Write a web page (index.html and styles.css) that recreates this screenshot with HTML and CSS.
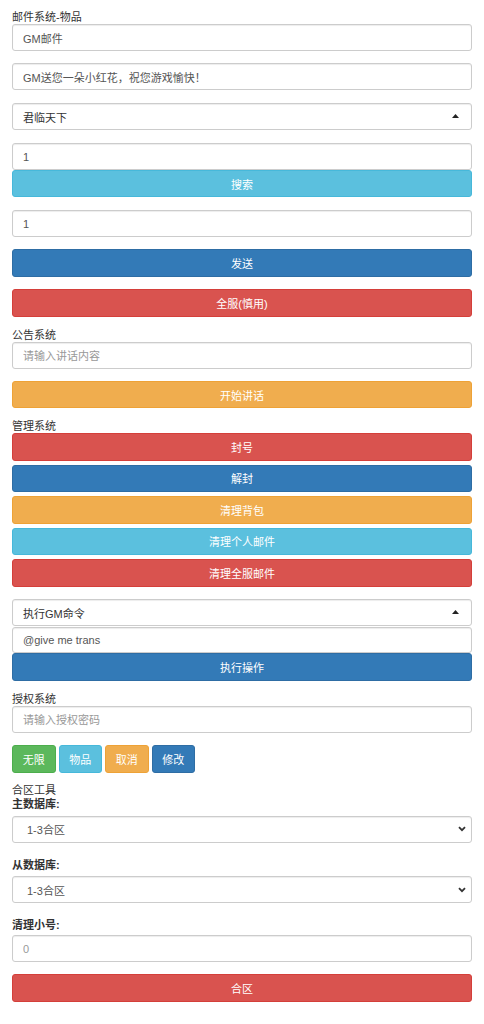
FILE: index.html
```html
<!DOCTYPE html>
<html lang="zh-CN">
<head>
<meta charset="utf-8">
<title>GM</title>
<link rel="stylesheet" href="styles.css">
</head>
<body>
<div class="page">
  <div class="title">邮件系统-物品</div>
  <input class="field" type="text" value="GM邮件">
  <input class="field mt12" type="text" value="GM送您一朵小红花，祝您游戏愉快！">
  <div class="select mt13"><span>君临天下</span><svg class="caret-up" width="7" height="4" viewBox="0 0 7 4"><path d="M0 4 L3.5 0 L7 4 Z" fill="#222"/></svg></div>
  <input class="field mt13" type="text" value="1">
  <button class="btn info">搜索</button>
  <input class="field mt13" type="text" value="1">
  <button class="btn primary tall mt12">发送</button>
  <button class="btn danger tall mt12">全服(慎用)</button>

  <div class="title mt11">公告系统</div>
  <input class="field" type="text" placeholder="请输入讲话内容">
  <button class="btn warning mt12">开始讲话</button>

  <div class="title mt11">管理系统</div>
  <div class="stack">
    <button class="btn danger mid">封号</button>
    <button class="btn primary mid">解封</button>
    <button class="btn warning mid">清理背包</button>
    <button class="btn info mid">清理个人邮件</button>
    <button class="btn danger mid">清理全服邮件</button>
  </div>
  <div class="select cmd"><span>执行GM命令</span><svg class="caret-up" width="7" height="4" viewBox="0 0 7 4"><path d="M0 4 L3.5 0 L7 4 Z" fill="#222"/></svg></div>
  <input class="field short mt1" type="text" value="@give me trans">
  <button class="btn primary tall">执行操作</button>

  <div class="title mt11">授权系统</div>
  <input class="field" type="text" placeholder="请输入授权密码">
  <div class="btn-row">
    <button class="btn small success">无限</button>
    <button class="btn small info">物品</button>
    <button class="btn small warning">取消</button>
    <button class="btn small primary">修改</button>
  </div>

  <div class="title mt10">合区工具</div>
  <div class="label">主数据库:</div>
  <div class="select native"><span>1-3合区</span><svg class="chev" width="8" height="6" viewBox="0 0 8 6"><path d="M1 1.2 L4 4.2 L7 1.2" fill="none" stroke="#333" stroke-width="1.8"/></svg></div>
  <div class="label mt15">从数据库:</div>
  <div class="select native"><span>1-3合区</span><svg class="chev" width="8" height="6" viewBox="0 0 8 6"><path d="M1 1.2 L4 4.2 L7 1.2" fill="none" stroke="#333" stroke-width="1.8"/></svg></div>
  <div class="label mt15 lb3">清理小号:</div>
  <input class="field" type="text" placeholder="0">
  <button class="btn danger tall mt12">合区</button>
</div>
</body>
</html>
```

FILE: styles.css
```css
* {
  box-sizing: border-box;
}

html, body {
  margin: 0;
  padding: 0;
  background: #fff;
}

body {
  font-family: "Liberation Sans", Arial, "Noto Sans CJK SC", sans-serif;
  font-size: 11px;
  color: #333;
}

.page {
  display: flex;
  flex-direction: column;
  padding: 10px 12px 0;
  width: 484px;
}

.title {
  line-height: 14px;
  height: 14px;
  color: #333;
}

.label {
  line-height: 14px;
  height: 14px;
  font-weight: bold;
  color: #333;
  margin-bottom: 4.5px;
}

.lb3 {
  margin-bottom: 3px;
}

.field {
  display: block;
  width: 100%;
  height: 27px;
  margin: 0;
  padding: 0 10px;
  font-family: inherit;
  font-size: 11px;
  color: #555;
  background: #fff;
  border: 1px solid #ccc;
  border-radius: 3px;
  box-shadow: inset 0 1px 1px rgba(0, 0, 0, 0.075);
  outline: none;
}

.field.short {
  height: 26px;
}

.field::placeholder {
  color: #999;
}

.select {
  display: flex;
  align-items: center;
  justify-content: space-between;
  height: 27px;
  padding: 0 12px 0 10px;
  background: #fff;
  border: 1px solid #ccc;
  border-radius: 3px;
  box-shadow: inset 0 1px 1px rgba(0, 0, 0, 0.075);
  color: #333;
}

.select.cmd {
  margin-top: 12.5px;
}

.select.native {
  padding: 0 5px 0 14px;
  color: #555;
}

.caret-up {
  display: block;
  margin-top: -1px;
}

.chev {
  display: block;
}

.btn {
  display: block;
  width: 100%;
  height: 27px;
  margin: 0;
  padding: 0;
  font-family: inherit;
  font-size: 11px;
  color: #fff;
  border: 1px solid transparent;
  border-radius: 3px;
  text-align: center;
  cursor: pointer;
}

.btn.tall {
  height: 28px;
}

.btn.mid {
  height: 27.5px;
}

.stack {
  display: flex;
  flex-direction: column;
  gap: 4px;
}

.btn-row {
  display: flex;
  gap: 3px;
  margin-top: 12px;
}

.btn.small {
  flex: 0 0 43.5px;
  width: 43.5px;
  height: 28px;
  padding: 0;
}

.primary {
  background: #337ab7;
  border-color: #2e6da4;
}

.danger {
  background: #d9534f;
  border-color: #d43f3a;
}

.warning {
  background: #f0ad4e;
  border-color: #eea236;
}

.info {
  background: #5bc0de;
  border-color: #46b8da;
}

.success {
  background: #5cb85c;
  border-color: #4cae4c;
}

.mt1 { margin-top: 1px; }
.mt10 { margin-top: 10px; }
.mt11 { margin-top: 11px; }
.mt12 { margin-top: 12px; }
.mt13 { margin-top: 13px; }
.mt15 { margin-top: 15px; }
```
